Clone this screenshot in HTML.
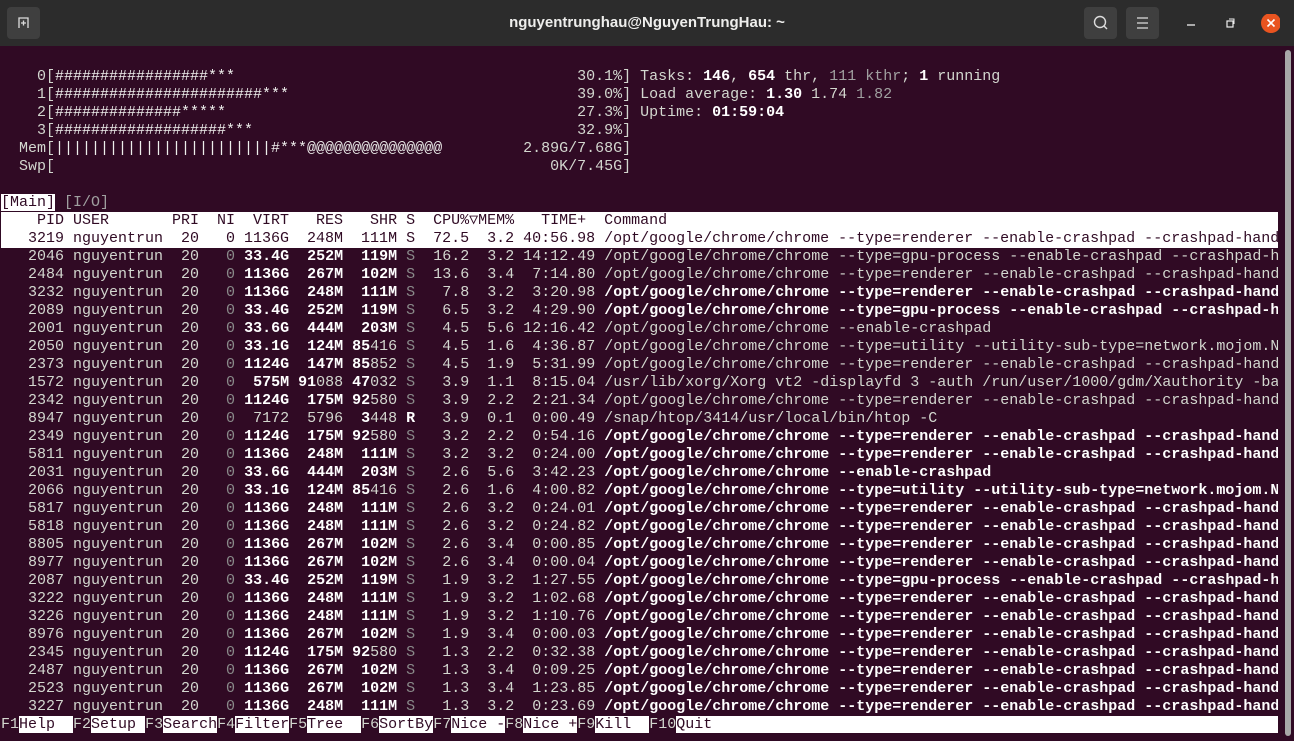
<!DOCTYPE html>
<html><head><meta charset="utf-8"><style>
html,body{margin:0;padding:0;width:1294px;height:741px;overflow:hidden;background:#300a24;}
#bar{position:absolute;left:0;top:0;width:1294px;height:46px;background:#2c2c2c;}
.btn{position:absolute;top:7px;width:33px;height:32px;background:#3f3f3f;border-radius:4px;}
#title{position:absolute;left:0;width:1294px;top:14px;text-align:center;font:bold 15px "Liberation Sans",sans-serif;color:#eeeeec;}
#term{position:absolute;left:1px;top:68px;font:15px/18px "Liberation Mono",monospace;color:#d3d7cf;}
#term div{height:18px;width:1277px;overflow:hidden;white-space:pre;}
b{font-weight:bold;color:#fff}
.d{color:#8a8a8a}
.g{color:#a0a0a0}
.w{background:#fff;color:#300a24}
.m{color:#eeeeec}
#sb{position:absolute;left:1285px;top:50px;width:6px;height:686px;background:#a8a8a8;border-radius:3px;}
</style></head><body>
<div id="bar">
<div class="btn" style="left:7px"><svg width="33" height="32"><path d="M12 21V11h9v10M16.5 13.5v5M14 16h5" stroke="#ddd" stroke-width="1.3" fill="none"/></svg></div>
<div id="title">nguyentrunghau@NguyenTrungHau: ~</div>
<div class="btn" style="left:1084px"><svg width="33" height="32"><circle cx="16" cy="15" r="5.5" stroke="#ddd" stroke-width="1.4" fill="none"/><path d="M20 19l3 3" stroke="#ddd" stroke-width="1.4"/></svg></div>
<div class="btn" style="left:1126px"><svg width="33" height="32"><path d="M11 11h11M11 16h11M11 21h11" stroke="#ddd" stroke-width="1.2"/></svg></div>
<svg style="position:absolute;left:1180px;top:14px" width="100" height="20"><path d="M7 11h8" stroke="#eee" stroke-width="1.3"/><rect x="47" y="7" width="6" height="6" stroke="#eee" fill="none" stroke-width="1.2"/><path d="M49 5h5v5" stroke="#eee" fill="none" stroke-width="1"/><circle cx="91" cy="9" r="10" fill="#e95420"/><path d="M87.5 5.5l7 7M94.5 5.5l-7 7" stroke="#fff" stroke-width="1.6"/></svg>
</div>
<div id="sb"></div>
<div id="term"><div>    0[<span class="m">#################***</span>                                      30.1%] Tasks: <b>146</b>, <b>654</b> thr, <span class="g">111 kthr</span>; <b>1</b> running</div><div>    1[<span class="m">#######################***</span>                                39.0%] Load average: <b>1.30</b> 1.74 <span class="g">1.82</span></div><div>    2[<span class="m">##############*****</span>                                       27.3%] Uptime: <b>01:59:04</b></div><div>    3[<span class="m">###################***</span>                                    32.9%]</div><div>  Mem[<span class="m">||||||||||||||||||||||||#***@@@@@@@@@@@@@@@</span>         2.89G/7.68G]</div><div>  Swp[                                                       0K/7.45G]</div><div> </div><div><span class="w">[Main]</span> <span class="g">[I/O]</span></div><div class="w">    PID USER       PRI  NI  VIRT   RES   SHR S  CPU%▽MEM%   TIME+  Command</div><div class="w">   3219 nguyentrun  20   0 1136G  248M  111M S  72.5  3.2 40:56.98 /opt/google/chrome/chrome --type=renderer --enable-crashpad --crashpad-hand</div><div>   2046 nguyentrun  20   <span class="d">0</span> <b>33.4G</b>  <b>252M</b>  <b>119M</b> <span class="d">S</span>  16.2  3.2 14:12.49 /opt/google/chrome/chrome --type=gpu-process --enable-crashpad --crashpad-h</div><div>   2484 nguyentrun  20   <span class="d">0</span> <b>1136G</b>  <b>267M</b>  <b>102M</b> <span class="d">S</span>  13.6  3.4  7:14.80 /opt/google/chrome/chrome --type=renderer --enable-crashpad --crashpad-hand</div><div>   3232 nguyentrun  20   <span class="d">0</span> <b>1136G</b>  <b>248M</b>  <b>111M</b> <span class="d">S</span>   7.8  3.2  3:20.98 <b>/opt/google/chrome/chrome --type=renderer --enable-crashpad --crashpad-hand</b></div><div>   2089 nguyentrun  20   <span class="d">0</span> <b>33.4G</b>  <b>252M</b>  <b>119M</b> <span class="d">S</span>   6.5  3.2  4:29.90 <b>/opt/google/chrome/chrome --type=gpu-process --enable-crashpad --crashpad-h</b></div><div>   2001 nguyentrun  20   <span class="d">0</span> <b>33.6G</b>  <b>444M</b>  <b>203M</b> <span class="d">S</span>   4.5  5.6 12:16.42 /opt/google/chrome/chrome --enable-crashpad</div><div>   2050 nguyentrun  20   <span class="d">0</span> <b>33.1G</b>  <b>124M</b> <b>85</b>416 <span class="d">S</span>   4.5  1.6  4:36.87 /opt/google/chrome/chrome --type=utility --utility-sub-type=network.mojom.N</div><div>   2373 nguyentrun  20   <span class="d">0</span> <b>1124G</b>  <b>147M</b> <b>85</b>852 <span class="d">S</span>   4.5  1.9  5:31.99 /opt/google/chrome/chrome --type=renderer --enable-crashpad --crashpad-hand</div><div>   1572 nguyentrun  20   <span class="d">0</span>  <b>575M</b> <b>91</b>088 <b>47</b>032 <span class="d">S</span>   3.9  1.1  8:15.04 /usr/lib/xorg/Xorg vt2 -displayfd 3 -auth /run/user/1000/gdm/Xauthority -ba</div><div>   2342 nguyentrun  20   <span class="d">0</span> <b>1124G</b>  <b>175M</b> <b>92</b>580 <span class="d">S</span>   3.9  2.2  2:21.34 /opt/google/chrome/chrome --type=renderer --enable-crashpad --crashpad-hand</div><div>   8947 nguyentrun  20   <span class="d">0</span>  7172  5796  <b>3</b>448 <b>R</b>   3.9  0.1  0:00.49 /snap/htop/3414/usr/local/bin/htop -C</div><div>   2349 nguyentrun  20   <span class="d">0</span> <b>1124G</b>  <b>175M</b> <b>92</b>580 <span class="d">S</span>   3.2  2.2  0:54.16 <b>/opt/google/chrome/chrome --type=renderer --enable-crashpad --crashpad-hand</b></div><div>   5811 nguyentrun  20   <span class="d">0</span> <b>1136G</b>  <b>248M</b>  <b>111M</b> <span class="d">S</span>   3.2  3.2  0:24.00 <b>/opt/google/chrome/chrome --type=renderer --enable-crashpad --crashpad-hand</b></div><div>   2031 nguyentrun  20   <span class="d">0</span> <b>33.6G</b>  <b>444M</b>  <b>203M</b> <span class="d">S</span>   2.6  5.6  3:42.23 <b>/opt/google/chrome/chrome --enable-crashpad</b></div><div>   2066 nguyentrun  20   <span class="d">0</span> <b>33.1G</b>  <b>124M</b> <b>85</b>416 <span class="d">S</span>   2.6  1.6  4:00.82 <b>/opt/google/chrome/chrome --type=utility --utility-sub-type=network.mojom.N</b></div><div>   5817 nguyentrun  20   <span class="d">0</span> <b>1136G</b>  <b>248M</b>  <b>111M</b> <span class="d">S</span>   2.6  3.2  0:24.01 <b>/opt/google/chrome/chrome --type=renderer --enable-crashpad --crashpad-hand</b></div><div>   5818 nguyentrun  20   <span class="d">0</span> <b>1136G</b>  <b>248M</b>  <b>111M</b> <span class="d">S</span>   2.6  3.2  0:24.82 <b>/opt/google/chrome/chrome --type=renderer --enable-crashpad --crashpad-hand</b></div><div>   8805 nguyentrun  20   <span class="d">0</span> <b>1136G</b>  <b>267M</b>  <b>102M</b> <span class="d">S</span>   2.6  3.4  0:00.85 <b>/opt/google/chrome/chrome --type=renderer --enable-crashpad --crashpad-hand</b></div><div>   8977 nguyentrun  20   <span class="d">0</span> <b>1136G</b>  <b>267M</b>  <b>102M</b> <span class="d">S</span>   2.6  3.4  0:00.04 <b>/opt/google/chrome/chrome --type=renderer --enable-crashpad --crashpad-hand</b></div><div>   2087 nguyentrun  20   <span class="d">0</span> <b>33.4G</b>  <b>252M</b>  <b>119M</b> <span class="d">S</span>   1.9  3.2  1:27.55 <b>/opt/google/chrome/chrome --type=gpu-process --enable-crashpad --crashpad-h</b></div><div>   3222 nguyentrun  20   <span class="d">0</span> <b>1136G</b>  <b>248M</b>  <b>111M</b> <span class="d">S</span>   1.9  3.2  1:02.68 <b>/opt/google/chrome/chrome --type=renderer --enable-crashpad --crashpad-hand</b></div><div>   3226 nguyentrun  20   <span class="d">0</span> <b>1136G</b>  <b>248M</b>  <b>111M</b> <span class="d">S</span>   1.9  3.2  1:10.76 <b>/opt/google/chrome/chrome --type=renderer --enable-crashpad --crashpad-hand</b></div><div>   8976 nguyentrun  20   <span class="d">0</span> <b>1136G</b>  <b>267M</b>  <b>102M</b> <span class="d">S</span>   1.9  3.4  0:00.03 <b>/opt/google/chrome/chrome --type=renderer --enable-crashpad --crashpad-hand</b></div><div>   2345 nguyentrun  20   <span class="d">0</span> <b>1124G</b>  <b>175M</b> <b>92</b>580 <span class="d">S</span>   1.3  2.2  0:32.38 <b>/opt/google/chrome/chrome --type=renderer --enable-crashpad --crashpad-hand</b></div><div>   2487 nguyentrun  20   <span class="d">0</span> <b>1136G</b>  <b>267M</b>  <b>102M</b> <span class="d">S</span>   1.3  3.4  0:09.25 <b>/opt/google/chrome/chrome --type=renderer --enable-crashpad --crashpad-hand</b></div><div>   2523 nguyentrun  20   <span class="d">0</span> <b>1136G</b>  <b>267M</b>  <b>102M</b> <span class="d">S</span>   1.3  3.4  1:23.85 <b>/opt/google/chrome/chrome --type=renderer --enable-crashpad --crashpad-hand</b></div><div>   3227 nguyentrun  20   <span class="d">0</span> <b>1136G</b>  <b>248M</b>  <b>111M</b> <span class="d">S</span>   1.3  3.2  0:23.69 <b>/opt/google/chrome/chrome --type=renderer --enable-crashpad --crashpad-hand</b></div><div>F1<span class="w">Help  </span>F2<span class="w">Setup </span>F3<span class="w">Search</span>F4<span class="w">Filter</span>F5<span class="w">Tree  </span>F6<span class="w">SortBy</span>F7<span class="w">Nice -</span>F8<span class="w">Nice +</span>F9<span class="w">Kill  </span>F10<span class="w">Quit                                                                                                                          </span></div></div>
</body></html>
